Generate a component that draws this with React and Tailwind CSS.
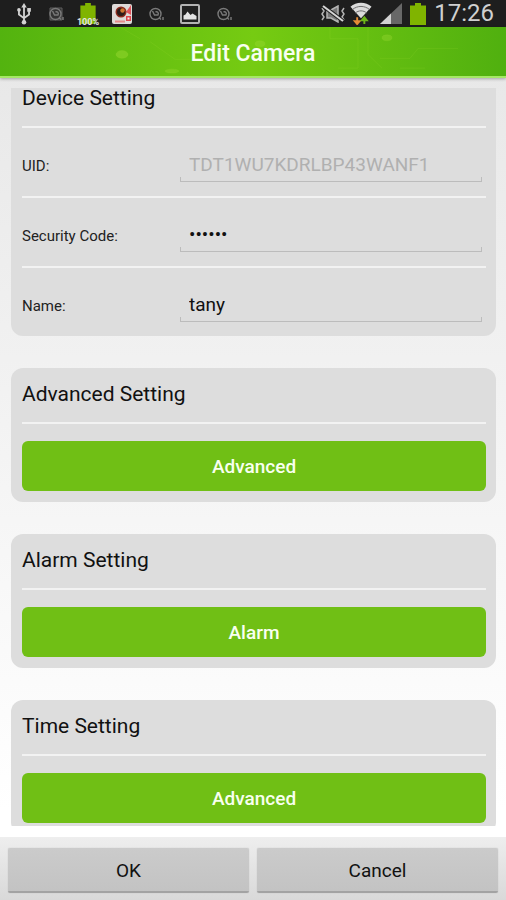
import { useState } from 'react';

const SwirlIcon = ({ boxed }) => (
    <svg viewBox="0 0 16 16" className="h-4 w-4" fill="none" stroke="#7a7a7a" strokeWidth="1.4">
        {boxed && <path d="M2 2h12v12H2z" fill="#333" stroke="#5e5e5e" strokeWidth="1" />}
        <circle cx="7.500" cy="8" r="5.500" />
        <path d="M4.500 5l2 4h3.500c1-2-.500-4-2.500-3" />
        <path d="M11 11.500l2 2M15 11v3" />
    </svg>
);

const BatteryIcon = ({ className }) => (
    <svg viewBox="0 0 16 22" className={className} fill="#80b400">
        <path d="M5 0h6v2.500h5V22H0V2.500h5z" />
    </svg>
);

function StatusBar() {
    return (
        <div className="flex h-[27px] shrink-0 items-center justify-between bg-[#1e1e1e] pl-4 pr-3">
            <div className="flex items-center gap-4">
                <svg viewBox="0 0 16 24" className="h-[22px] w-4" fill="none" stroke="#d2d2d2" strokeWidth="2">
                    <path d="M8 3v17M2.500 8v4.500L8 16.500l5.500-4V7" />
                    <path d="M8 0l3 5H5z" fill="#d2d2d2" stroke="none" />
                    <circle cx="8" cy="21" r="2.500" fill="#d2d2d2" stroke="none" />
                    <circle cx="2.500" cy="7.500" r="2" fill="#d2d2d2" stroke="none" />
                    <path d="M11.500 5.500h4v4h-4z" fill="#d2d2d2" stroke="none" />
                </svg>
                <SwirlIcon boxed />
                <div className="relative h-[22px] w-4">
                    <BatteryIcon className="h-[21px] w-4" />
                    <span className="absolute -bottom-0.5 -left-1 w-6 text-center text-[9px] leading-[9px] font-bold text-[#e6e6e6]">100%</span>
                </div>
                <svg viewBox="0 0 20 20" className="h-5 w-5">
                    <rect width="20" height="20" rx="2" fill="#dedad8" />
                    <path d="M19 1v10l-5-3z" fill="#e0545c" />
                    <circle cx="9" cy="8" r="5.500" fill="#8c2a1c" />
                    <circle cx="9" cy="8" r="4" fill="#2c1c1a" />
                    <circle cx="10.500" cy="6.500" r="2.200" fill="#d0762f" />
                    <path d="M3 16.500h10v2H3z" fill="#e58a8a" />
                    <path d="M14 12h5v5h-5z" fill="#e0454c" />
                    <path d="M15.500 13.500h2v2h-2z" fill="#f0efee" />
                </svg>
                <SwirlIcon />
                <svg viewBox="0 0 20 20" className="h-5 w-5">
                    <rect x="1" y="1" width="18" height="18" rx="1" fill="#222" stroke="#b4b4b4" strokeWidth="2" />
                    <path d="M3.500 15.500v-4l2-1 2-3 3 3.500 2-1.500 4 2.500v3.500z" fill="#e4e4e4" />
                </svg>
                <SwirlIcon />
            </div>
            <div className="flex items-center gap-2">
                <svg viewBox="0 0 26 18" className="h-[18px] w-[26px]" fill="none" stroke="#b4b4b4" strokeWidth="1.5">
                    <path d="M2 3l2 3-2 3 2 3-2 3M24 3l-2 3 2 3-2 3 2 3" />
                    <path d="M7 5h4L18 1v16l-7-4H7z" fill="#777" />
                    <path d="M3 1l20 15" stroke="#1e1e1e" strokeWidth="4" />
                    <path d="M3 1l20 15" stroke="#d6d6d6" strokeWidth="2" />
                </svg>
                <svg viewBox="0 0 22 24" className="-ml-1 h-[23px] w-[22px]" fill="none">
                    <path d="M0 5C6-.500 16-.500 22 5L11 17z" fill="#dcdcdc" />
                    <path d="M2 8c5-4.500 13-4.500 18 0M5 11.500c3.500-3 8.500-3 12 0" stroke="#6a6a6a" strokeWidth="1" />
                    <path d="M7 16v5M4.500 20L7 23l2.500-3z" stroke="#e58a35" strokeWidth="2" fill="#e58a35" />
                    <path d="M14.500 23v-5M12 19l2.500-3 2.500 3z" stroke="#6db61a" strokeWidth="2" fill="#6db61a" />
                </svg>
                <svg viewBox="0 0 22 21" className="h-[21px] w-[22px]">
                    <path d="M0 21L22 0v21z" fill="#686868" />
                    <path d="M0 21L11 10.500V21z" fill="#d2d2d2" />
                </svg>
                <BatteryIcon className="h-[22px] w-4" />
                <span className="text-2xl leading-[27px] text-[#d0d0d0]">17:26</span>
            </div>
        </div>
    );
}

function Header() {
    return (
        <header className="relative flex h-[51px] shrink-0 items-center justify-center border-b-2 border-[#a5e866] bg-linear-to-r from-[#53b30f] via-[#76cb12] to-[#50b00f] pt-1.5 shadow-[0_1px_3px_rgba(0,0,0,0.3)]">
            <svg viewBox="0 0 506 50" preserveAspectRatio="none" className="absolute inset-0 h-full w-full" fill="none" stroke="#a6de3a" strokeOpacity="0.15">
                <path d="M150 15l25 18h60M330 0v12h28v30h-20M368 0v28l14 14M380 32h30l8-10h40M120 0l20 12M400 42h25" />
                <ellipse cx="122" cy="8" rx="0" ry="0" />
                <ellipse cx="122" cy="28" rx="6" ry="4" fill="#a6de3a" fillOpacity="0.4" />
                <ellipse cx="387" cy="11" rx="5" ry="3" fill="#a6de3a" fillOpacity="0.3" />
                <ellipse cx="260" cy="17" rx="5" ry="3" fill="#a6de3a" fillOpacity="0.3" />
                <ellipse cx="172" cy="45" rx="7" ry="2" fill="#a6de3a" fillOpacity="0.3" />
            </svg>
            <h1 className="relative text-[23px] font-medium text-[#f8fff0]">Edit Camera</h1>
        </header>
    );
}

function Card({ title, scrolled, children }) {
    return (
        <section className={`bg-[#dddddd] pr-[10px] pl-[11px] ${scrolled ? 'rounded-b-xl' : 'rounded-xl pt-4'}`}>
            <h2 className="h-[38px] text-[21px] leading-5 text-[#111]">{title}</h2>
            {children}
        </section>
    );
}

function Field({ id, label, ...props }) {
    return (
        <div className="flex h-[70px] border-t-2 border-[#f2f2f2] pt-5 pr-1">
            <label htmlFor={id} className="w-[158px] shrink-0 pt-1 text-[15px] leading-7 text-[#222]">
                {label}
            </label>
            <div className="relative h-[34px] flex-1 border-b border-[#bcbcbc] before:absolute before:bottom-0 before:left-0 before:h-1 before:w-px before:bg-[#bcbcbc] after:absolute after:right-0 after:bottom-0 after:h-1 after:w-px after:bg-[#bcbcbc]">
                <input id={id} className="h-full w-full bg-transparent px-[9px] text-[19px] text-[#111] outline-none disabled:text-[#b0b0b0]" {...props} />
            </div>
        </div>
    );
}

function ActionCard({ title, action }) {
    return (
        <Card title={title}>
            <div className="border-t-2 border-[#f2f2f2] pt-[17px] pb-[11px]">
                <button className="h-[50px] w-full rounded-md bg-[#70bf15] pt-0.5 text-[19px] font-medium text-[#f8fff0]">{action}</button>
            </div>
        </Card>
    );
}

const footerButton = 'h-[45px] flex-1 rounded-xs border-b-2 border-[#a3a3a3] bg-linear-to-b from-[#cbcbcb] to-[#c3c3c3] pt-1 text-[19px] text-[#111] shadow-[0_0_1px_#aaa]';

export default function App() {
    const [code, setCode] = useState('888888');
    const [name, setName] = useState('tany');

    return (
        <div className="flex h-screen flex-col bg-linear-to-b from-[#e6e6e6] to-white to-90% font-[Roboto,sans-serif]">
            <StatusBar />
            <Header />

            <main className="mb-[11px] min-h-0 flex-1 overflow-y-auto pt-[10px] pr-[10px] pl-[11px] [scrollbar-width:none]">
                <div className="flex flex-col gap-8">
                    <Card title="Device Setting" scrolled>
                        <Field id="uid" label="UID:" defaultValue="TDT1WU7KDRLBP43WANF1" disabled />
                        <Field id="code" label="Security Code:" type="password" value={code} onChange={(e) => setCode(e.target.value)} />
                        <Field id="name" label="Name:" value={name} onChange={(e) => setName(e.target.value)} />
                    </Card>
                    <ActionCard title="Advanced Setting" action="Advanced" />
                    <ActionCard title="Alarm Setting" action="Alarm" />
                    <ActionCard title="Time Setting" action="Advanced" />
                </div>
            </main>

            <footer className="flex shrink-0 gap-2 bg-linear-to-b from-[#eeeeee] to-[#d9d9d9] px-2 pt-[11px] pb-[7px]">
                <button className={footerButton}>OK</button>
                <button className={footerButton}>Cancel</button>
            </footer>
        </div>
    );
}
